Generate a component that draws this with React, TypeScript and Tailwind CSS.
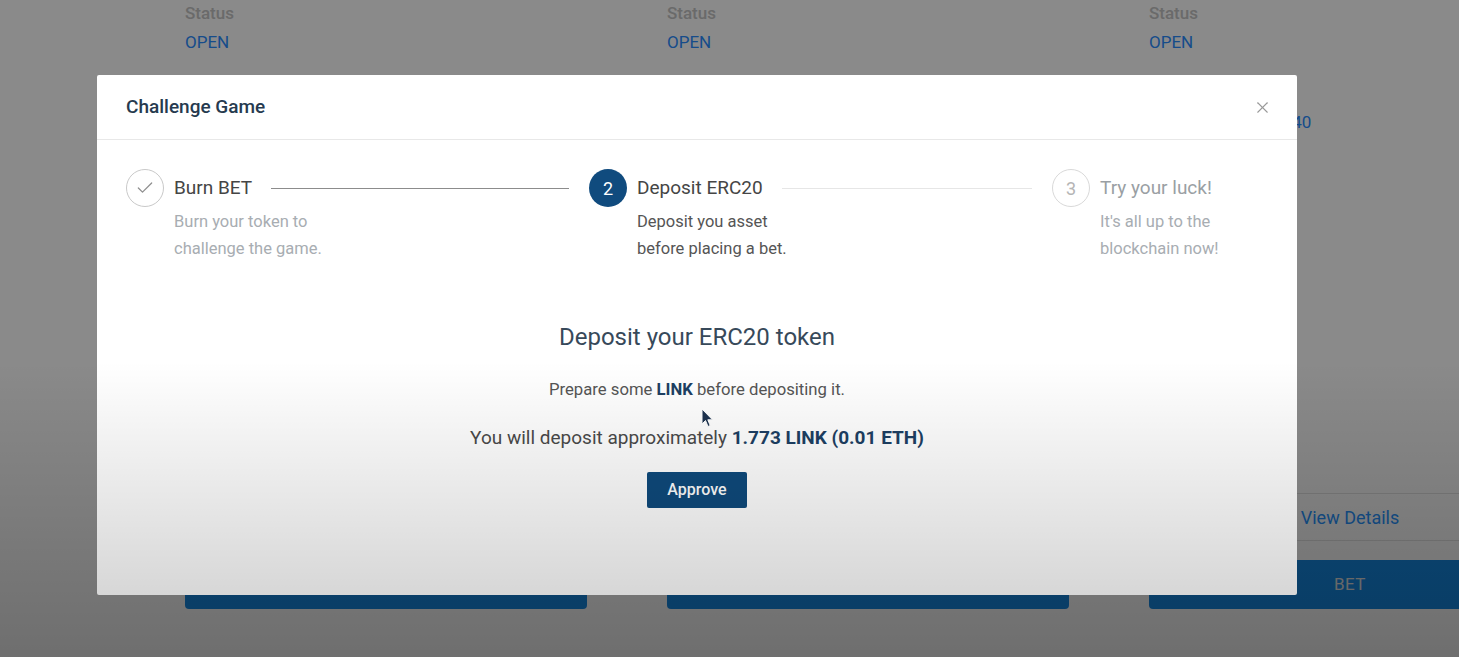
import { X, Check } from "lucide-react";

const cards = [
  { id: 1, amount: "" },
  { id: 2, amount: "" },
  { id: 3, amount: "10000000000000040" },
];

const GameCard = ({ amount }: { amount: string }) => {
  return (
    <div className="w-[402px] shrink-0 h-[609px] flex flex-col">
      <p className="text-[17px] leading-[26px] text-[#c4c4c4] font-medium">Status</p>
      <p className="text-[17px] leading-[32px] text-[#2a8cff]">OPEN</p>
      <p className="mt-[48px] h-[32px] text-[17px] leading-[32px] text-[#2a8cff]">{amount}</p>
      <div className="flex-1" />
      <div className="h-[48px] border-y border-[#e4e4e4] flex items-center justify-center text-[18px] text-[#2894ff]">
        View Details
      </div>
      <button className="mt-[19px] h-[49px] w-full bg-[#1689e4] rounded-sm text-[17px] text-[#e2e2e2] tracking-wide">
        BET
      </button>
    </div>
  );
};

type StepProps = {
  icon: React.ReactNode;
  title: string;
  desc: [string, string];
  titleColor: string;
  descColor: string;
  lineColor?: string;
  last?: boolean;
};

const Step = ({ icon, title, desc, titleColor, descColor, lineColor, last }: StepProps) => {
  return (
    <div className={last ? "flex-1 flex" : "w-[463px] shrink-0 flex overflow-hidden"}>
      {icon}
      <div className="ml-[10px] flex-1 min-w-0">
        <div className="flex items-center h-[38px]">
          <span className={`text-[19px] whitespace-nowrap ${titleColor}`}>{title}</span>
          {!last && <div className={`ml-[19px] mr-[20px] flex-1 h-px ${lineColor}`} />}
        </div>
        <p className={`mt-[1px] text-[16.5px] leading-[27px] ${descColor}`}>
          {desc[0]}
          <br />
          {desc[1]}
        </p>
      </div>
    </div>
  );
};

export default function App() {
  return (
    <div className="relative h-[657px] w-full overflow-hidden bg-white font-['Roboto',sans-serif]">
      <div className="flex gap-[80px] pl-[185px]">
        {cards.map((c) => (
          <GameCard key={c.id} amount={c.amount} />
        ))}
      </div>

      <div className="absolute inset-0 bg-black/[0.46]" />

      <div className="absolute left-[97px] top-[75px] w-[1200px] h-[520px] bg-white rounded-[2px] flex flex-col">
        <div className="h-[65px] border-b border-[#e8e8e8] px-[29px] flex items-center justify-between">
          <h1 className="text-[19px] font-medium text-[#263a4f]">Challenge Game</h1>
          <X className="w-[19px] h-[19px] text-[#9a9a9a] mr-[-4px]" strokeWidth={1.4} />
        </div>

        <div className="px-[29px] pt-[29px] flex">
          <Step
            icon={
              <div className="w-[38px] h-[38px] shrink-0 rounded-full border border-[#c9c9c9] flex items-center justify-center">
                <Check className="w-[20px] h-[20px] text-[#8e8e8e]" strokeWidth={1.5} />
              </div>
            }
            title="Burn BET"
            desc={["Burn your token to", "challenge the game."]}
            titleColor="text-[#454545]"
            descColor="text-[#a8adb2]"
            lineColor="bg-[#8c8c8c]"
          />
          <Step
            icon={
              <div className="w-[38px] h-[38px] shrink-0 rounded-full bg-[#104b7e] flex items-center justify-center text-[18px] text-white">
                2
              </div>
            }
            title="Deposit ERC20"
            desc={["Deposit you asset", "before placing a bet."]}
            titleColor="text-[#454545]"
            descColor="text-[#555555]"
            lineColor="bg-[#e6e6e6]"
          />
          <Step
            icon={
              <div className="w-[38px] h-[38px] shrink-0 rounded-full border border-[#d9d9d9] flex items-center justify-center text-[18px] text-[#b5b5b5]">
                3
              </div>
            }
            title="Try your luck!"
            desc={["It's all up to the", "blockchain now!"]}
            titleColor="text-[#9a9fa4]"
            descColor="text-[#a8adb2]"
            last
          />
        </div>

        <div className="mt-[59px] flex flex-col items-center">
          <h2 className="text-[24px] leading-[32px] text-[#37495a]">Deposit your ERC20 token</h2>
          <p className="mt-[24px] text-[16.7px] leading-[25px] text-[#555]">
            Prepare some <span className="font-bold text-[#1d3f63]">LINK</span> before depositing it.
          </p>
          <p className="mt-[22px] text-[19px] leading-[27px] text-[#4a4a4a]">
            You will deposit approximately{" "}
            <span className="font-bold text-[#1d3f63]">1.773 LINK (0.01 ETH)</span>
          </p>
          <button className="mt-[21px] w-[100px] h-[36px] rounded-[2px] bg-[#0e4a7c] text-white text-[16px] font-medium">
            Approve
          </button>
        </div>
      </div>

      <svg className="absolute left-[701px] top-[408px]" width="13" height="20" viewBox="0 0 13 20">
        <path d="M1 1 L1 16 L4.5 12.5 L7 18.5 L9.2 17.5 L6.8 11.8 L11.5 11.8 Z" fill="#1d3350" stroke="#ffffff" strokeWidth="1" />
      </svg>

      <div className="pointer-events-none absolute inset-0 bg-[linear-gradient(to_bottom,transparent_55%,rgba(0,0,0,0.2))]" />
    </div>
  );
}
